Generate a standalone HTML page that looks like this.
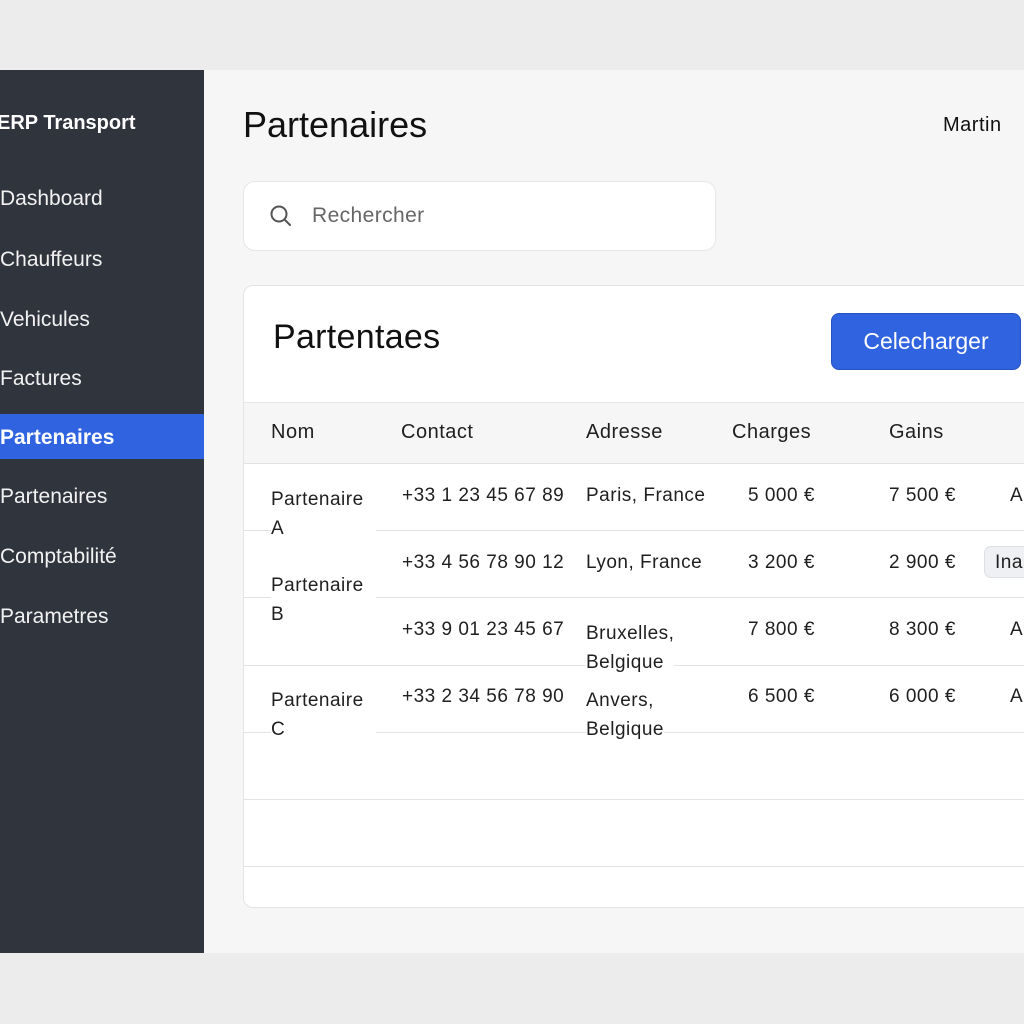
<!DOCTYPE html>
<html><head><meta charset="utf-8"><style>
*{margin:0;padding:0;box-sizing:border-box}
body{width:1024px;height:1024px;background:#ececec;position:relative;overflow:hidden;font-family:"Liberation Sans",sans-serif;color:#1a1a1a}
.a{position:absolute;white-space:nowrap}
#side{left:0;top:70px;width:204px;height:883px;background:#30343d}
#main{left:204px;top:70px;width:820px;height:883px;background:#f6f6f6}
.nav{left:0;font-size:21px;color:#f2f2f2}
.card{left:243px;top:285px;width:800px;height:623px;background:#fff;border:1px solid #e4e4e4;border-radius:10px;overflow:hidden}
.t{font-size:19px;color:#1f1f1f;letter-spacing:0.5px}
.line{position:absolute;left:244px;width:780px;height:1px;background:#e2e2e2}
</style></head><body>
<div class="a" id="side"></div>
<div class="a" id="main"></div>
<div class="a" style="left:-3px;top:112px;font-size:20px;font-weight:bold;color:#fff">ERP Transport</div>
<div class="a nav" style="top:187px">Dashboard</div>
<div class="a nav" style="top:248px">Chauffeurs</div>
<div class="a nav" style="top:308px">Vehicules</div>
<div class="a nav" style="top:367px">Factures</div>
<div class="a" style="left:0;top:414px;width:204px;height:45px;background:#2f63e0"></div>
<div class="a nav" style="top:426px;color:#fff;font-weight:bold">Partenaires</div>
<div class="a nav" style="top:485px">Partenaires</div>
<div class="a nav" style="top:545px">Comptabilité</div>
<div class="a nav" style="top:605px">Parametres</div>
<div class="a" style="left:243px;top:104px;font-size:36px;color:#111">Partenaires</div>
<div class="a" style="left:943px;top:114px;font-size:20px;color:#111;letter-spacing:0.5px">Martin</div>
<div class="a" style="left:243px;top:181px;width:473px;height:70px;background:#fff;border:1px solid #e6e6e6;border-radius:12px"></div>
<svg class="a" style="left:268px;top:203px" width="26" height="26" viewBox="0 0 26 26"><circle cx="11" cy="11" r="7.5" fill="none" stroke="#555" stroke-width="2"/><line x1="16.5" y1="16.5" x2="22" y2="22" stroke="#555" stroke-width="2" stroke-linecap="round"/></svg>
<div class="a" style="left:312px;top:204px;font-size:21px;color:#666;letter-spacing:0.4px">Rechercher</div>
<div class="a card"></div>
<div class="a" style="left:273px;top:318px;font-size:34px;color:#111;letter-spacing:0.3px">Partentaes</div>
<div class="a" style="left:831px;top:313px;width:190px;height:57px;background:#2f63e0;border:1px solid #2453c0;border-radius:8px;color:#fff;font-size:23px;text-align:center;line-height:55px">Celecharger</div>
<div class="a" style="left:244px;top:402px;width:780px;height:62px;background:#f6f6f6;border-top:1px solid #e6e6e6;border-bottom:1px solid #e2e2e2"></div>
<div class="a t" style="left:271px;top:421px;font-size:20px">Nom</div>
<div class="a t" style="left:401px;top:421px;font-size:20px">Contact</div>
<div class="a t" style="left:586px;top:421px;font-size:20px">Adresse</div>
<div class="a t" style="left:732px;top:421px;font-size:20px">Charges</div>
<div class="a t" style="left:889px;top:421px;font-size:20px">Gains</div>
<div class="line" style="top:530px"></div>
<div class="line" style="top:597px"></div>
<div class="line" style="top:665px"></div>
<div class="line" style="top:732px"></div>
<div class="line" style="top:799px"></div>
<div class="line" style="top:866px"></div>
<div class="a t" style="left:271px;top:485px;line-height:29px;white-space:normal;width:105px;background:#fff">Partenaire A</div>
<div class="a t" style="left:402px;top:485px">+33 1 23 45 67 89</div>
<div class="a t" style="left:586px;top:485px">Paris, France</div>
<div class="a t" style="left:748px;top:485px">5 000 €</div>
<div class="a t" style="left:889px;top:485px">7 500 €</div>
<div class="a t" style="left:1010px;top:485px">A</div>
<div class="a t" style="left:271px;top:571px;line-height:29px;white-space:normal;width:105px;background:#fff">Partenaire B</div>
<div class="a t" style="left:402px;top:552px">+33 4 56 78 90 12</div>
<div class="a t" style="left:586px;top:552px">Lyon, France</div>
<div class="a t" style="left:748px;top:552px">3 200 €</div>
<div class="a t" style="left:889px;top:552px">2 900 €</div>
<div class="a" style="left:984px;top:546px;width:60px;height:32px;background:#eef0f3;border:1px solid #dcdfe4;border-radius:7px"></div>
<div class="a t" style="left:995px;top:552px">Ina</div>
<div class="a t" style="left:402px;top:619px">+33 9 01 23 45 67</div>
<div class="a t" style="left:586px;top:619px;line-height:29px;background:#fff">Bruxelles,<br>Belgique</div>
<div class="a t" style="left:748px;top:619px">7 800 €</div>
<div class="a t" style="left:889px;top:619px">8 300 €</div>
<div class="a t" style="left:1010px;top:619px">A</div>
<div class="a t" style="left:271px;top:686px;line-height:29px;white-space:normal;width:105px;background:#fff">Partenaire C</div>
<div class="a t" style="left:402px;top:686px">+33 2 34 56 78 90</div>
<div class="a t" style="left:586px;top:686px;line-height:29px;background:#fff">Anvers,<br>Belgique</div>
<div class="a t" style="left:748px;top:686px">6 500 €</div>
<div class="a t" style="left:889px;top:686px">6 000 €</div>
<div class="a t" style="left:1010px;top:686px">A</div>
</body></html>
